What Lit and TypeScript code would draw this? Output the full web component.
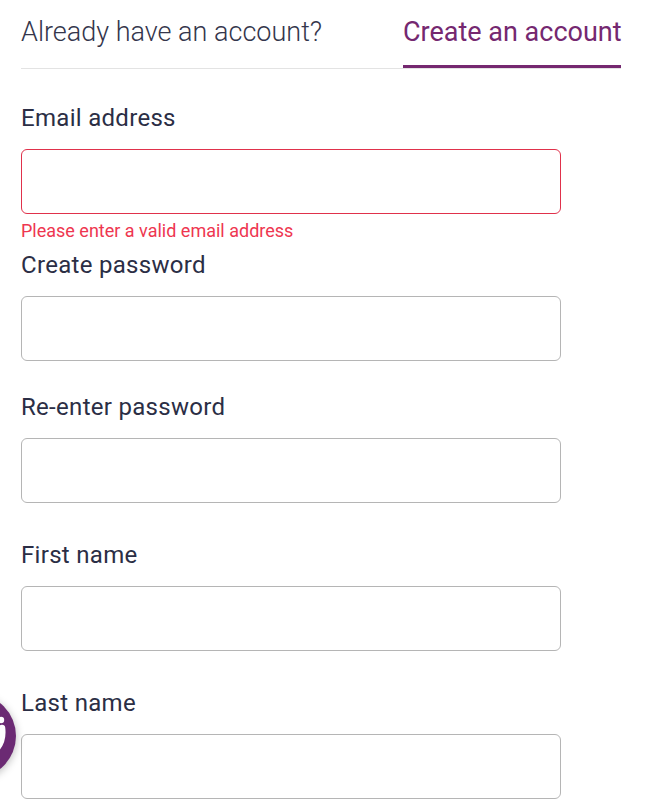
import { LitElement, html, css, svg } from "lit";
import { customElement } from "lit/decorators.js";

const fields = [
  { label: "Email address", cls: "f1", error: "Please enter a valid email address" },
  { label: "Create password", cls: "f2", type: "password" },
  { label: "Re-enter password", cls: "f3", type: "password" },
  { label: "First name", cls: "f4" },
  { label: "Last name", cls: "f4" },
];

@customElement("app-root")
export class AppRoot extends LitElement {
  static styles = css`
    :host {
      display: block;
      position: relative;
      height: 803px;
      overflow: hidden;
      background: #fff;
      font-family: Roboto, "Liberation Sans", sans-serif;
      color: #2b2e45;
    }
    .page {
      padding: 0 0 0 21px;
      width: 600px;
    }
    .tabs {
      display: flex;
      justify-content: space-between;
      height: 69px;
      box-sizing: border-box;
      border-bottom: 1px solid #e3e3e3;
    }
    .tab {
      font-size: 27px;
      line-height: 30px;
      padding-top: 17px;
      box-sizing: border-box;
      height: 69px;
    }
    .signin {
      font-weight: 300;
      color: #34364c;
    }
    .create {
      color: #752870;
      border-bottom: 3px solid #752870;
      width: 218px;
      height: 68px;
      white-space: nowrap;
    }
    .field {
      display: flex;
      flex-direction: column;
      width: 540px;
    }
    .f1 { margin-top: 34px; }
    .f3 { margin-top: 31px; }
    .f4 { margin-top: 37px; }
    label {
      font-size: 24px;
      line-height: 30px;
      margin-bottom: 16px;
      letter-spacing: 0.3px;
    }
    input {
      display: block;
      box-sizing: border-box;
      width: 540px;
      height: 65px;
      margin: 0;
      background: #fff;
      border: 1px solid #b5b5b5;
      border-radius: 6px;
      outline: none;
    }
    input.bad {
      border-color: #e0314b;
    }
    .error {
      font-size: 18px;
      line-height: 20px;
      margin-top: 7px;
      margin-bottom: 9px;
      color: #ee3650;
    }
    .badge {
      position: absolute;
      left: -68px;
      top: 694px;
      width: 84px;
      height: 84px;
      border-radius: 50%;
      background: #6b2a73;
      box-shadow: 0 2px 8px rgba(0, 0, 0, 0.28);
    }
    .badge svg {
      display: block;
    }
  `;

  render() {
    return html`
      <div class="page">
        <div class="tabs">
          <div class="tab signin">Already have an account?</div>
          <div class="tab create">Create an account</div>
        </div>
        ${fields.map(
          (f) => html`
            <div class="field ${f.cls}">
              <label>${f.label}</label>
              <input class=${f.error ? "bad" : ""} type=${f.type ?? "text"} />
              ${f.error ? html`<div class="error">${f.error}</div>` : ""}
            </div>
          `
        )}
      </div>
      <div class="badge">
        <svg width="84" height="84" viewBox="0 0 84 84" fill="none">
          ${svg`<circle cx="69" cy="26" r="3.2" fill="#fff"/>
          <path d="M70 34 C71 42 70 48 65 54" stroke="#fff" stroke-width="6.5" stroke-linecap="round"/>`}
        </svg>
      </div>
    `;
  }
}
